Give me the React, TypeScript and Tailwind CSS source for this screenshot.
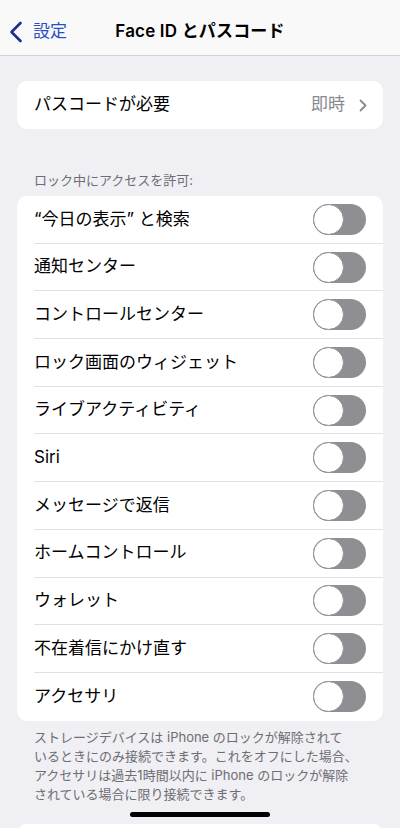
const font = { fontFamily: '"Inter", "Noto Sans CJK JP", sans-serif' };

const rows = [
  '“今日の表示” と検索',
  '通知センター',
  'コントロールセンター',
  'ロック画面のウィジェット',
  'ライブアクティビティ',
  'Siri',
  'メッセージで返信',
  'ホームコントロール',
  'ウォレット',
  '不在着信にかけ直す',
  'アクセサリ',
];

const footerLines = [
  'ストレージデバイスは iPhone のロックが解除されて',
  'いるときにのみ接続できます。これをオフにした場合、',
  'アクセサリは過去1時間以内に iPhone のロックが解除',
  'されている場合に限り接続できます。',
];

function Toggle() {
  return (
    <div className="relative w-[53px] h-[31px] rounded-full bg-[#8e8e93]">
      <div className="absolute left-0 top-0 w-[31px] h-[31px] rounded-full bg-white border border-[#8e8e93]" />
    </div>
  );
}

export default function App() {
  return (
    <div className="w-[400px] h-[828px] overflow-hidden bg-[#efeff4] text-black flex flex-col" style={font}>
      {/* Nav bar */}
      <div className="h-[56px] bg-[#f9f9f9] border-b border-[#d1d1d6] flex items-center relative shrink-0">
        <div className="flex items-center pl-[9px] pt-[8px] gap-[10px]">
          <svg width="14" height="22" viewBox="0 0 14 22" fill="none">
            <path d="M11.5 2 L2.5 11 L11.5 20" stroke="#1c2e8c" strokeWidth="2.6" strokeLinecap="round" strokeLinejoin="round" />
          </svg>
          <span className="text-[17px] text-[#2a4fc4]">設定</span>
        </div>
        <div className="absolute left-0 right-0 top-[8px] bottom-0 flex items-center justify-center pointer-events-none">
          <span className="text-[17px] font-semibold tracking-[0.01em]">Face ID とパスコード</span>
        </div>
      </div>

      {/* Passcode card */}
      <div className="mx-[17px] mt-[25px] h-[48px] bg-white rounded-[10px] flex items-center pl-[17px] pr-[16px] shrink-0">
        <span className="flex-1 text-[17px]">パスコードが必要</span>
        <span className="text-[17px] text-[#8a8a8e] mr-[14px]">即時</span>
        <svg width="8" height="13" viewBox="0 0 8 13" fill="none">
          <path d="M1.5 1.5 L6.5 6.5 L1.5 11.5" stroke="#8a8a8e" strokeWidth="1.8" strokeLinecap="round" strokeLinejoin="round" />
        </svg>
      </div>

      {/* Section header */}
      <div className="mt-[42px] pl-[34px] text-[13px] text-[#6d6d72] leading-[18px] shrink-0">ロック中にアクセスを許可:</div>

      {/* Toggles card */}
      <div className="mx-[17px] mt-[7px] bg-white rounded-[10px] overflow-hidden shrink-0">
        {rows.map((label, i) => (
          <div key={label} className="h-[47.7px] flex pl-[17px]">
            <div
              className={`flex-1 flex items-center pr-[17px] ${i < rows.length - 1 ? 'border-b border-[#e0e0e5]' : ''}`}
            >
              <span className="flex-1 text-[17px]">{label}</span>
              <Toggle />
            </div>
          </div>
        ))}
      </div>

      {/* Footer */}
      <div className="mt-[7px] px-[34px] text-[13px] leading-[19px] text-[#6d6d72] shrink-0">
        {footerLines.map((line) => (
          <div key={line} className="whitespace-nowrap">{line}</div>
        ))}
      </div>

      {/* Home indicator + next card peeking in */}
      <div className="mt-[8px] flex flex-col shrink-0">
        <div className="self-center w-[140px] h-[5px] rounded-full bg-black" />
        <div className="mx-[17px] mt-[7px] h-[40px] bg-white rounded-[10px]" />
      </div>
    </div>
  );
}
